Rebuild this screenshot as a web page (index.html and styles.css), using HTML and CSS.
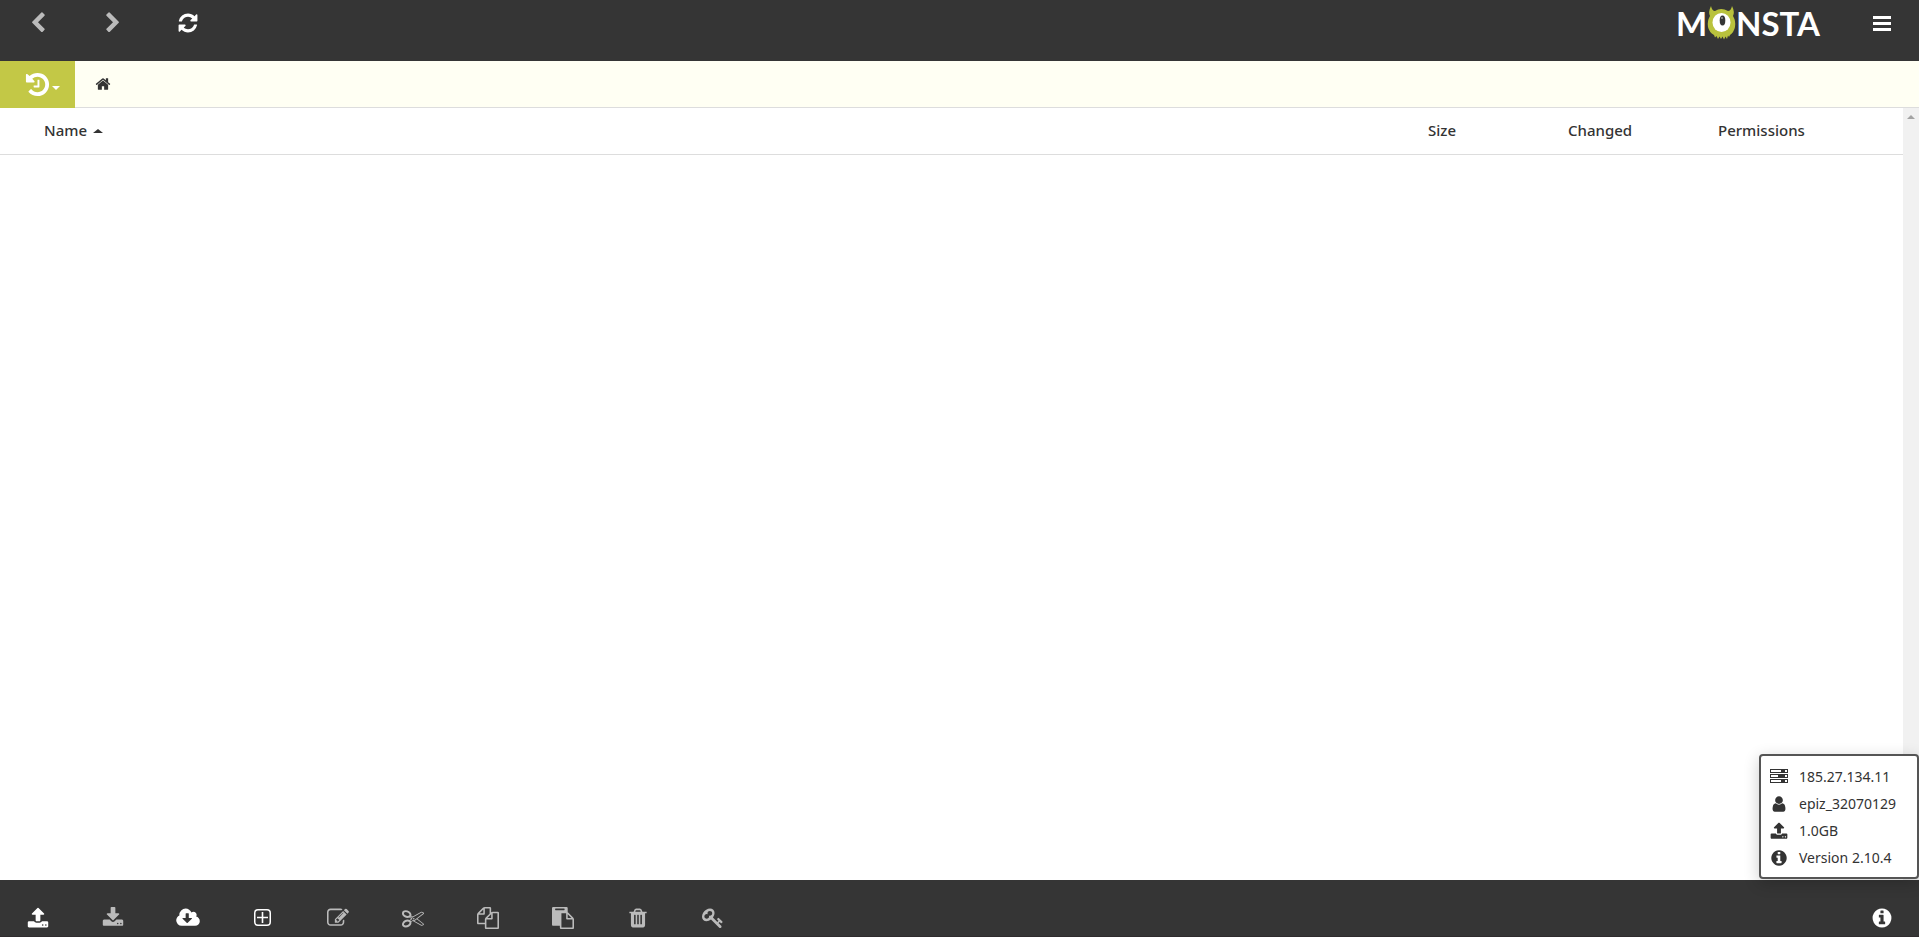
FILE: index.html
```
<!DOCTYPE html>
<html lang="en">
<head>
    <meta charset="UTF-8">
    <meta name="viewport" content="width=device-width, initial-scale=1.0">
    <title>Monsta</title>
    <link rel="stylesheet" href="styles.css">
</head>
<body>

<header class="toolbar top">
    <button class="tool disabled" aria-label="Back"><svg class="icon" viewBox="0 0 1792 1792"><path d="M1427 301l-531 531 531 531q19 19 19 45t-19 45l-166 166q-19 19-45 19t-45-19l-742-742q-19-19-19-45t19-45l742-742q19-19 45-19t45 19l166 166q19 19 19 45t-19 45z"/></svg></button>
    <button class="tool disabled" aria-label="Forward"><svg class="icon" viewBox="0 0 1792 1792"><path d="M1363 877l-742 742q-19 19-45 19t-45-19l-166-166q-19-19-19-45t19-45l531-531-531-531q-19-19-19-45t19-45l166-166q19-19 45-19t45 19l742 742q19 19 19 45t-19 45z"/></svg></button>
    <button class="tool" aria-label="Refresh"><svg class="icon" viewBox="0 0 1792 1792"><path d="M1639 1056q0 5-1 7-64 268-268 434.5t-478 166.5q-146 0-282.5-55t-243.5-157l-129 129q-19 19-45 19t-45-19-19-45v-448q0-26 19-45t45-19h448q26 0 45 19t19 45-19 45l-137 137q71 66 161 102t187 36q134 0 250-65t186-179q11-17 53-117 8-23 30-23h192q13 0 22.5 9.5t9.5 22.5zm25-800v448q0 26-19 45t-45 19h-448q-26 0-45-19t-19-45 19-45l138-138q-148-137-349-137-134 0-250 65t-186 179q-11 17-53 117-8 23-30 23h-199q-13 0-22.5-9.5t-9.5-22.5v-7q65-268 270-434.5t480-166.5q146 0 284 55.5t245 156.5l130-129q19-19 45-19t45 19 19 45z"/></svg></button>
    <a href="#" class="logo" aria-label="Monsta">
        <span>M</span>
        <svg class="monster" viewBox="0 0 29 34">
            <path fill="#b9c23d" d="M4 0Q5 5 8 5Q14 1 21 5Q24 5 25 0Q28 6 26 10Q29 15 28 21Q27 26 23 29L22 31L21 29.500L20 33L18.500 30.500L17 33.500L15.500 30.500L14 33L12.500 30.500L11 33L9.500 30L8 31.500L7 29Q2 26 1 21Q0 15 3 10Q1 6 4 0Z"/>
            <ellipse fill="#fff" cx="14.500" cy="16.500" rx="9" ry="9.500"/>
            <ellipse fill="#353535" cx="15.500" cy="14.500" rx="2.800" ry="5"/>
            <circle fill="#fff" cx="15" cy="12" r="0.700"/>
        </svg>
        <span>NSTA</span>
    </a>
    <button class="tool" aria-label="Menu"><svg class="icon" viewBox="0 0 22 22"><path d="M2 4h18v3H2zM2 10h18v3H2zM2 16h18v3H2z"/></svg></button>
</header>

<nav class="path-bar">
    <button class="history" aria-label="History">
        <svg class="icon" viewBox="0 0 1792 1792"><path d="M1664 896q0 156-61 298t-164 245-245 164-298 61q-172 0-327-72.5t-264-204.5q-7-10-6.5-22.5t8.5-20.5l137-138q10-9 25-9 16 2 23 12 73 95 179 147t225 52q104 0 198.500-40.500t163.500-109.500 109.500-163.500 40.500-198.500-40.500-198.500-109.500-163.500-163.500-109.500-198.500-40.500q-98 0-188 35.500t-160 101.500l137 138q31 30 14 69-17 40-59 40h-448q-26 0-45-19t-19-45v-448q0-42 40-59 39-17 69 14l130 129q107-101 244.500-156.500t284.500-55.500q156 0 298 61t245 164 164 245 61 298zm-640-288v448q0 14-9 23t-23 9h-320q-14 0-23-9t-9-23v-64q0-14 9-23t23-9h224v-352q0-14 9-23t23-9h64q14 0 23 9t9 23z"/></svg>
        <span class="caret-down"></span>
    </button>
    <a href="#" class="home" aria-label="Home"><svg class="icon" viewBox="0 0 1792 1792"><path d="M1472 992v480q0 26-19 45t-45 19h-384v-384h-256v384h-384q-26 0-45-19t-19-45v-480q0-1 .5-3t.5-3l575-474 575 474q1 2 1 6zm223-69l-62 74q-8 9-21 11h-3q-13 0-21-7l-692-577-692 577q-12 8-24 7-13-2-21-11l-62-74q-8-10-7-23.500t11-21.500l719-599q32-26 76-26t76 26l244 204v-195q0-14 9-23t23-9h192q14 0 23 9t9 23v408l219 182q10 8 11 21.500t-7 23.500z"/></svg></a>
</nav>

<main class="files">
    <div class="list">
        <table>
            <thead>
                <tr>
                    <th class="name">Name<span class="caret-up"></span></th>
                    <th class="size">Size</th>
                    <th class="changed">Changed</th>
                    <th class="permissions">Permissions</th>
                </tr>
            </thead>
        </table>
    </div>
    <div class="scrollbar"><span class="scroll-up"></span></div>

    <ul class="info">
        <li><svg class="icon" viewBox="0 0 18 18"><path fill-rule="evenodd" d="M0 1h18v4H0zM1 2v2h10V2zM15 2v2h2V2zM0 6h18v4H0zM1 7v2h7V7zM15 7v2h2V7zM0 11h18v4H0zM1 12v2h10v-2zM15 12v2h2v-2z"/></svg><span>185.27.134.11</span></li>
        <li><svg class="icon" viewBox="0 0 1792 1792"><path d="M1536 1399q0 109-62.500 187t-150.500 78h-854q-88 0-150.500-78t-62.500-187q0-85 8.500-160.500t31.500-152 58.500-131 94-89 134.500-34.500q131 128 313 128t313-128q76 0 134.500 34.500t94 89 58.500 131 31.500 152 8.500 160.500zm-256-887q0 159-112.500 271.500t-271.500 112.500-271.500-112.500-112.500-271.500 112.500-271.500 271.500-112.500 271.500 112.500 112.500 271.500z"/></svg><span>epiz_32070129</span></li>
        <li><svg class="icon" viewBox="0 0 1792 1792"><use href="#upload"/></svg><span>1.0GB</span></li>
        <li><svg class="icon" viewBox="0 0 1792 1792"><use href="#info"/></svg><span>Version 2.10.4</span></li>
    </ul>
</main>

<footer class="toolbar bottom">
    <button class="tool" aria-label="Upload"><svg class="icon" viewBox="0 0 1792 1792"><path id="upload" d="M1344 1472q0-26-19-45t-45-19-45 19-19 45 19 45 45 19 45-19 19-45zm256 0q0-26-19-45t-45-19-45 19-19 45 19 45 45 19 45-19 19-45zm128-224v320q0 40-28 68t-68 28h-1472q-40 0-68-28t-28-68v-320q0-40 28-68t68-28h427q21 56 70.500 92t110.500 36h256q61 0 110.500-36t70.500-92h427q40 0 68 28t28 68zm-325-648q-17 40-59 40h-256v448q0 26-19 45t-45 19h-256q-26 0-45-19t-19-45v-448h-256q-42 0-59-40-17-39 14-69l448-448q18-19 45-19t45 19l448 448q31 30 14 69z"/></svg></button>
    <button class="tool disabled" aria-label="Download"><svg class="icon" viewBox="0 0 1792 1792"><path d="M1344 1344q0-26-19-45t-45-19-45 19-19 45 19 45 45 19 45-19 19-45zm256 0q0-26-19-45t-45-19-45 19-19 45 19 45 45 19 45-19 19-45zm128-224v320q0 40-28 68t-68 28h-1472q-40 0-68-28t-28-68v-320q0-40 28-68t68-28h465l135 136q58 56 136 56t136-56l136-136h464q40 0 68 28t28 68zm-325-569q17 41-14 70l-448 448q-18 19-45 19t-45-19l-448-448q-31-29-14-70 17-39 59-39h256v-448q0-26 19-45t45-19h256q26 0 45 19t19 45v448h256q42 0 59 39z"/></svg></button>
    <button class="tool" aria-label="Fetch file"><svg class="icon wide" viewBox="-64 0 1920 1792"><path d="M1216 928q0-14-9-23t-23-9h-224v-352q0-13-9.500-22.500t-22.500-9.500h-192q-13 0-22.500 9.500t-9.500 22.500v352h-224q-13 0-22.500 9.500t-9.500 22.500q0 14 9 23l352 352q9 9 23 9t23-9l351-351q10-12 10-24zm640 224q0 159-112.500 271.500t-271.500 112.500h-1088q-185 0-316.500-131.500t-131.500-316.500q0-130 70-240t188-165q-2-30-2-43 0-212 150-362t362-150q156 0 285.500 87t188.500 231q71-62 166-62 106 0 181 75t75 181q0 76-41 138 130 31 213.500 135.500t83.500 238.500z"/></svg></button>
    <button class="tool" aria-label="New"><svg class="icon" viewBox="0 0 22 22"><path fill-rule="evenodd" d="M6 2h9a4 4 0 0 1 4 4v9a4 4 0 0 1-4 4H6a4 4 0 0 1-4-4V6a4 4 0 0 1 4-4zM6 3.500A2.500 2.500 0 0 0 3.500 6v9A2.500 2.500 0 0 0 6 17.500h9a2.500 2.500 0 0 0 2.500-2.500V6A2.500 2.500 0 0 0 15 3.500zM9.700 5h1.600v4.700H16v1.600h-4.700V16H9.700v-4.700H5V9.700h4.700z"/></svg></button>
    <button class="tool disabled" aria-label="Edit"><svg class="icon" viewBox="0 0 1792 1792"><path d="M888 1184l116-116-152-152-116 116v56h96v96h56zm440-720q-16-16-33 1l-350 350q-17 17-1 33t33-1l350-350q17-17 1-33zm80 594v190q0 119-84.500 203.500t-203.500 84.500h-832q-119 0-203.500-84.500t-84.500-203.500v-832q0-119 84.500-203.500t203.500-84.500h832q63 0 117 25 15 7 18 23 3 17-9 29l-49 49q-14 14-32 8-23-6-45-6h-832q-66 0-113 47t-47 113v832q0 66 47 113t113 47h832q66 0 113-47t47-113v-126q0-13 9-22l64-64q15-15 35-7t20 29zm-96-738l288 288-672 672h-288v-288zm444 132l-92 92-288-288 92-92q28-28 68-28t68 28l152 152q28 28 28 68t-28 68z"/></svg></button>
    <button class="tool disabled" aria-label="Cut"><svg class="icon" viewBox="0 0 1792 1792"><path d="M960 896q26 0 45 19t19 45-19 45-45 19-45-19-19-45 19-45 45-19zm300 64l507 398q28 20 25 56-5 35-35 51l-128 64q-13 7-29 7-17 0-31-8l-690-387-110 66q-8 4-12 5 14 49 10 97-7 77-56 147.500t-132 123.500q-132 84-277 84-136 0-222-78-90-84-79-207 7-76 56-147t131-124q132-84 278-84 83 0 151 31 9-13 22-22l122-73-122-73q-13-9-22-22-68 31-151 31-146 0-278-84-82-53-131-124t-56-147q-5-59 15.500-113t63.500-93q85-79 222-79 145 0 277 84 83 52 132 123t56 148q4 48-10 97 4 1 12 5l110 66 690-387q14-8 31-8 16 0 29 7l128 64q30 16 35 51 3 36-25 56zm-681-260q46-42 21-108t-106-117q-92-59-192-59-74 0-113 36-46 42-21 108t106 117q92 59 192 59 74 0 113-36zm-85 745q81-51 106-117t-21-108q-39-36-113-36-100 0-192 59-81 51-106 117t21 108q39 36 113 36 100 0 192-59zm178-613l96 58v-11q0-36 33-56l14-8-79-44-26 26q-3 3-10 11t-12 12q-2 2-4 3.500t-3 2.500zm224 224l96 32 736-576-128-64-768 431v113l-160 96 9 8q2 2 7 6 4 4 11 12t11 12l26 26zm704 416l128-64-520-408-177 138q-2 3-13 7z"/></svg></button>
    <button class="tool disabled" aria-label="Copy"><svg class="icon" viewBox="0 0 1792 1792"><path d="M1696 384q40 0 68 28t28 68v1216q0 40-28 68t-68 28h-960q-40 0-68-28t-28-68v-288h-544q-40 0-68-28t-28-68v-672q0-40 20-88t48-76l408-408q28-28 76-48t88-20h416q40 0 68 28t28 68v328q68-40 128-40h416zm-544 213l-299 299h299v-299zm-640-384l-299 299h299v-299zm196 647l316-316v-416h-384v416q0 40-28 68t-68 28h-416v640h512v-256q0-40 20-88t48-76zm956 804v-1152h-384v416q0 40-28 68t-68 28h-416v640h896z"/></svg></button>
    <button class="tool disabled" aria-label="Paste"><svg class="icon" viewBox="0 0 1792 1792"><path d="M768 1664h896v-640h-416q-40 0-68-28t-28-68v-416h-384v1152zm256-1440v-64q0-13-9.500-22.500t-22.500-9.500h-704q-13 0-22.500 9.500t-9.500 22.500v64q0 13 9.500 22.500t22.500 9.500h704q13 0 22.500-9.500t9.500-22.500zm256 672h299l-299-299v299zm512 128v672q0 40-28 68t-68 28h-960q-40 0-68-28t-28-68v-160h-544q-40 0-68-28t-28-68v-1344q0-40 28-68t68-28h1088q40 0 68 28t28 68v328q21 13 36 28l408 408q28 28 48 76t20 88z"/></svg></button>
    <button class="tool disabled" aria-label="Delete"><svg class="icon" viewBox="0 0 1792 1792"><path d="M704 1376v-704q0-14-9-23t-23-9h-64q-14 0-23 9t-9 23v704q0 14 9 23t23 9h64q14 0 23-9t9-23zm256 0v-704q0-14-9-23t-23-9h-64q-14 0-23 9t-9 23v704q0 14 9 23t23 9h64q14 0 23-9t9-23zm256 0v-704q0-14-9-23t-23-9h-64q-14 0-23 9t-9 23v704q0 14 9 23t23 9h64q14 0 23-9t9-23zm-544-992h448l-48-117q-7-9-17-11h-317q-10 2-17 11zm928 32v64q0 14-9 23t-23 9h-96v948q0 83-47 143.500t-113 60.500h-832q-66 0-113-58.500t-47-141.500v-952h-96q-14 0-23-9t-9-23v-64q0-14 9-23t23-9h309l70-167q15-37 54-63t79-26h320q40 0 79 26t54 63l70 167h309q14 0 23 9t9 23z"/></svg></button>
    <button class="tool disabled" aria-label="Permissions"><svg class="icon" viewBox="0 0 1792 1792"><path d="M832 512q0-80-56-136t-136-56-136 56-56 136q0 42 19 83-41-19-83-19-80 0-136 56t-56 136 56 136 136 56 136-56 56-136q0-42-19-83 41 19 83 19 80 0 136-56t56-136zm851 704q0 17-49 66t-66 49q-9 0-28.500-16t-36.500-33-38.500-40-24.500-26l-96 96 220 220q28 28 28 68 0 42-39 81t-81 39q-40 0-68-28l-671-671q-176 131-365 131-163 0-265.500-102.500t-102.500-265.500q0-160 95-313t248-248 313-95q163 0 265.500 102.500t102.500 265.500q0 189-131 365l355 355 96-96q-3-3-26-24.500t-40-38.500-33-36.500-16-28.500q0-17 49-66t66-49q13 0 23 10 6 6 46 44.500t82 79.500 86.500 86 73 78 28.500 41z"/></svg></button>
    <button class="tool last" aria-label="Information"><svg class="icon" viewBox="0 0 1792 1792"><path id="info" d="M1152 1376v-160q0-14-9-23t-23-9h-96v-512q0-14-9-23t-23-9h-320q-14 0-23 9t-9 23v160q0 14 9 23t23 9h96v320h-96q-14 0-23 9t-9 23v160q0 14 9 23t23 9h448q14 0 23-9t9-23zm-128-896v-160q0-14-9-23t-23-9h-192q-14 0-23 9t-9 23v160q0 14 9 23t23 9h192q14 0 23-9t9-23zm640 416q0 209-103 385.500t-279.500 279.500-385.500 103-385.500-103-279.500-279.500-103-385.500 103-385.500 279.500-279.500 385.500-103 385.500 103 279.500 279.500 103 385.500z"/></svg></button>
</footer>

</body>
</html>
```
FILE: styles.css
```
* {
    box-sizing: border-box;
}
body {
    margin: 0;
    height: 100vh;
    display: flex;
    flex-direction: column;
    font-family: "Noto Sans", "Open Sans", sans-serif;
    font-size: 14px;
    color: #333;
    background-color: #fff;
}
button {
    border: none;
    background: none;
    padding: 0;
    cursor: pointer;
}
.icon {
    display: block;
    width: 22px;
    height: 22px;
    fill: currentColor;
    flex: none;
}
.icon.wide {
    width: 24px;
}
.toolbar {
    display: flex;
    align-items: flex-start;
    flex: none;
    background-color: #353535;
}
.top {
    height: 61px;
}
.bottom {
    height: 57px;
    padding-top: 15px;
    border-bottom: 1px solid #2f2b2d;
}
.tool {
    display: flex;
    align-items: center;
    justify-content: center;
    width: 75px;
    height: 46px;
    color: #fff;
}
.bottom .tool {
    height: 45px;
}
.tool.disabled {
    color: #bbb;
}
.last {
    margin-left: auto;
}

/* logo */
.logo {
    display: flex;
    align-items: center;
    height: 46px;
    margin-left: auto;
    margin-right: 24px;
    color: #fff;
    font-family: Lato, sans-serif;
    font-size: 33px;
    font-weight: 700;
    line-height: 46px;
    text-decoration: none;
}
.monster {
    width: 29px;
    height: 34px;
}

/* path */
.path-bar {
    display: flex;
    flex: none;
    height: 47px;
    background-color: #fffff3;
    border-bottom: 1px solid #ddd;
}
.history {
    display: flex;
    align-items: center;
    justify-content: center;
    gap: 1px;
    width: 75px;
    height: 47px;
    padding-left: 9px;
    background-color: #c3c846;
    color: #fff;
}
.history .icon {
    width: 27px;
    height: 27px;
}
.caret-down {
    margin-top: 6px;
    border: 4px solid transparent;
    border-top-color: #fff;
    border-bottom: none;
}
.home {
    display: flex;
    align-items: center;
    padding: 0 20px;
    color: #333;
}
.home .icon {
    width: 16px;
    height: 16px;
}

/* file list */
.files {
    position: relative;
    display: flex;
    flex: 1;
}
.list {
    flex: 1;
}
table {
    width: 100%;
    border-collapse: separate;
    border-spacing: 0;
    table-layout: fixed;
}
th {
    height: 47px;
    padding: 0 0 2px;
    border-bottom: 1px solid #ddd;
    font-size: 15px;
    font-weight: 500;
    text-align: left;
}
.name {
    padding-left: 44px;
}
.size {
    width: 140px;
}
.changed {
    width: 150px;
}
.permissions {
    width: 185px;
}
.caret-up {
    display: inline-block;
    margin-left: 6px;
    vertical-align: 3px;
    border: 5px solid transparent;
    border-bottom: 4px solid #333;
    border-top: none;
}
.scrollbar {
    display: flex;
    justify-content: center;
    width: 16px;
    padding-top: 7px;
    background-color: #f1f1f1;
}
.scroll-up {
    height: 4px;
    border: 4px solid transparent;
    border-bottom-color: #a3a3a3;
    border-top: none;
}

/* server info */
.info {
    position: absolute;
    right: 0;
    bottom: 1px;
    width: 160px;
    margin: 0;
    padding: 7px 9px 6px;
    list-style: none;
    background-color: #fff;
    border: 2px solid #555;
    border-radius: 4px;
    box-shadow: 0 4px 16px rgba(0, 0, 0, 0.2);
}
.info li {
    display: flex;
    align-items: center;
    gap: 11px;
    height: 27px;
}
.info .icon {
    width: 18px;
    height: 18px;
}
```
